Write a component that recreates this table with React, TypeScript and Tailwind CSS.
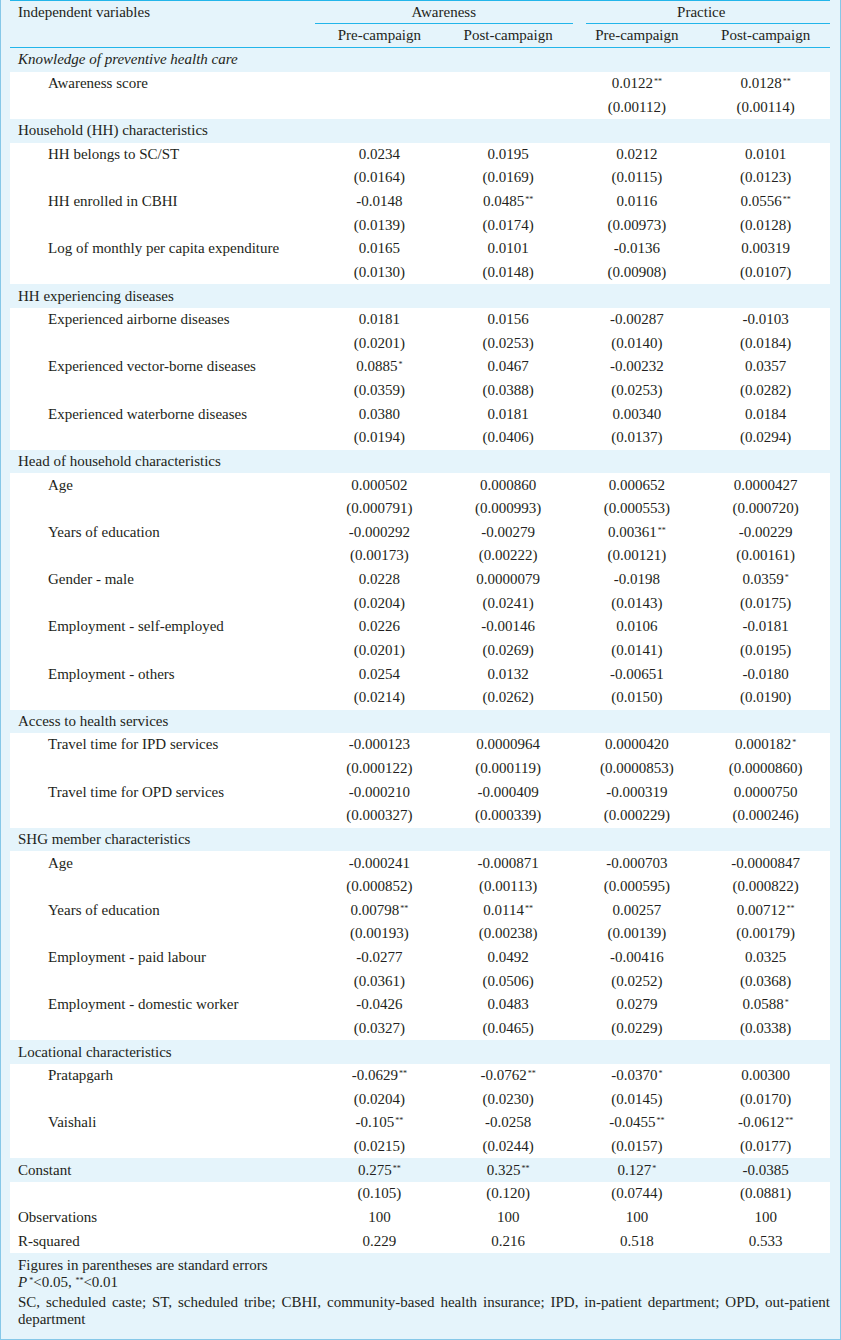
import React from 'react';

type Item = { label: string; coef: string[]; se: string[] };
type Section = { title: string; italic?: boolean; items: Item[] };

const SECTIONS: Section[] = [
  {
    title: 'Knowledge of preventive health care',
    italic: true,
    items: [{ label: 'Awareness score', coef: ['', '', '0.0122**', '0.0128**'], se: ['', '', '(0.00112)', '(0.00114)'] }],
  },
  {
    title: 'Household (HH) characteristics',
    items: [
      { label: 'HH belongs to SC/ST', coef: ['0.0234', '0.0195', '0.0212', '0.0101'], se: ['(0.0164)', '(0.0169)', '(0.0115)', '(0.0123)'] },
      { label: 'HH enrolled in CBHI', coef: ['-0.0148', '0.0485**', '0.0116', '0.0556**'], se: ['(0.0139)', '(0.0174)', '(0.00973)', '(0.0128)'] },
      { label: 'Log of monthly per capita expenditure', coef: ['0.0165', '0.0101', '-0.0136', '0.00319'], se: ['(0.0130)', '(0.0148)', '(0.00908)', '(0.0107)'] },
    ],
  },
  {
    title: 'HH experiencing diseases',
    items: [
      { label: 'Experienced airborne diseases', coef: ['0.0181', '0.0156', '-0.00287', '-0.0103'], se: ['(0.0201)', '(0.0253)', '(0.0140)', '(0.0184)'] },
      { label: 'Experienced vector-borne diseases', coef: ['0.0885*', '0.0467', '-0.00232', '0.0357'], se: ['(0.0359)', '(0.0388)', '(0.0253)', '(0.0282)'] },
      { label: 'Experienced waterborne diseases', coef: ['0.0380', '0.0181', '0.00340', '0.0184'], se: ['(0.0194)', '(0.0406)', '(0.0137)', '(0.0294)'] },
    ],
  },
  {
    title: 'Head of household characteristics',
    items: [
      { label: 'Age', coef: ['0.000502', '0.000860', '0.000652', '0.0000427'], se: ['(0.000791)', '(0.000993)', '(0.000553)', '(0.000720)'] },
      { label: 'Years of education', coef: ['-0.000292', '-0.00279', '0.00361**', '-0.00229'], se: ['(0.00173)', '(0.00222)', '(0.00121)', '(0.00161)'] },
      { label: 'Gender - male', coef: ['0.0228', '0.0000079', '-0.0198', '0.0359*'], se: ['(0.0204)', '(0.0241)', '(0.0143)', '(0.0175)'] },
      { label: 'Employment - self-employed', coef: ['0.0226', '-0.00146', '0.0106', '-0.0181'], se: ['(0.0201)', '(0.0269)', '(0.0141)', '(0.0195)'] },
      { label: 'Employment - others', coef: ['0.0254', '0.0132', '-0.00651', '-0.0180'], se: ['(0.0214)', '(0.0262)', '(0.0150)', '(0.0190)'] },
    ],
  },
  {
    title: 'Access to health services',
    items: [
      { label: 'Travel time for IPD services', coef: ['-0.000123', '0.0000964', '0.0000420', '0.000182*'], se: ['(0.000122)', '(0.000119)', '(0.0000853)', '(0.0000860)'] },
      { label: 'Travel time for OPD services', coef: ['-0.000210', '-0.000409', '-0.000319', '0.0000750'], se: ['(0.000327)', '(0.000339)', '(0.000229)', '(0.000246)'] },
    ],
  },
  {
    title: 'SHG member characteristics',
    items: [
      { label: 'Age', coef: ['-0.000241', '-0.000871', '-0.000703', '-0.0000847'], se: ['(0.000852)', '(0.00113)', '(0.000595)', '(0.000822)'] },
      { label: 'Years of education', coef: ['0.00798**', '0.0114**', '0.00257', '0.00712**'], se: ['(0.00193)', '(0.00238)', '(0.00139)', '(0.00179)'] },
      { label: 'Employment - paid labour', coef: ['-0.0277', '0.0492', '-0.00416', '0.0325'], se: ['(0.0361)', '(0.0506)', '(0.0252)', '(0.0368)'] },
      { label: 'Employment - domestic worker', coef: ['-0.0426', '0.0483', '0.0279', '0.0588*'], se: ['(0.0327)', '(0.0465)', '(0.0229)', '(0.0338)'] },
    ],
  },
  {
    title: 'Locational characteristics',
    items: [
      { label: 'Pratapgarh', coef: ['-0.0629**', '-0.0762**', '-0.0370*', '0.00300'], se: ['(0.0204)', '(0.0230)', '(0.0145)', '(0.0170)'] },
      { label: 'Vaishali', coef: ['-0.105**', '-0.0258', '-0.0455**', '-0.0612**'], se: ['(0.0215)', '(0.0244)', '(0.0157)', '(0.0177)'] },
    ],
  },
];

// split "0.0122**" into value + stars
function Val({ v }: { v: string }) {
  const m = v.match(/^(.*?)(\*+)$/);
  if (!m) return <>{v}</>;
  return (
    <>
      {m[1]}
      <sup className="text-[8px] ml-[1px]">{m[2]}</sup>
    </>
  );
}

function Row({ label, vals, indent, blue, tall = true }: { label?: string; vals: string[]; indent?: boolean; blue?: boolean; tall?: boolean }) {
  return (
    <div className={`grid grid-cols-[305px_repeat(4,1fr)] items-center ${tall ? 'h-[23.63px]' : 'h-[23px]'} ${blue ? '' : 'bg-white'}`}>
      <div className={indent ? 'pl-[38px]' : 'pl-[8px]'}>{label}</div>
      {vals.map((v, i) => (
        <div key={i} className="text-center">
          <Val v={v} />
        </div>
      ))}
    </div>
  );
}

export default function App() {
  return (
    <div
      className="w-[841px] h-[1340px] bg-[#e5f4fb] border border-t-0 border-[#86c8e8] pl-[9px] text-[15px] text-[#231f20] leading-none"
      style={{ fontFamily: '"Liberation Serif", "DejaVu Serif", serif' }}
    >
      <div className="w-[820px] border-t border-[#22b5ea]">
        {/* header */}
        <div className="border-b border-[#22b5ea]">
          <div className="grid grid-cols-[305px_repeat(4,1fr)] h-[23px]">
            <div className="pl-[8px] flex items-center">Independent variables</div>
            <div className="col-span-2 flex flex-col">
              <div className="flex-1 flex items-center justify-center">Awareness</div>
              <div className="h-px bg-[#22b5ea]" />
            </div>
            <div className="col-span-2 flex flex-col">
              <div className="flex-1 flex items-center justify-center">Practice</div>
              <div className="h-px bg-[#22b5ea] ml-[13px]" />
            </div>
          </div>
          <Row blue tall={false} vals={['Pre-campaign', 'Post-campaign', 'Pre-campaign', 'Post-campaign']} />
        </div>

        {SECTIONS.map((s) => (
          <div key={s.title}>
            <div className={`h-[23.63px] flex items-center pl-[8px] ${s.italic ? 'italic' : ''}`}>{s.title}</div>
            {s.items.map((it) => (
              <div key={it.label + s.title}>
                <Row indent label={it.label} vals={it.coef} />
                <Row vals={it.se} />
              </div>
            ))}
          </div>
        ))}

        <Row blue label="Constant" vals={['0.275**', '0.325**', '0.127*', '-0.0385']} />
        <Row vals={['(0.105)', '(0.120)', '(0.0744)', '(0.0881)']} />
        <Row label="Observations" vals={['100', '100', '100', '100']} />
        <Row label="R-squared" vals={['0.229', '0.216', '0.518', '0.533']} />

        <div className="pl-[8px] pt-[4px] leading-[17px]">
          <p>Figures in parentheses are standard errors</p>
          <p>
            <span className="italic">P</span>
            <sup className="text-[8px]"> *</sup>&lt;0.05, <sup className="text-[8px]">**</sup>&lt;0.01
          </p>
          <p className="mt-[3px] text-justify">
            SC, scheduled caste; ST, scheduled tribe; CBHI, community-based health insurance; IPD, in-patient department; OPD, out-patient department
          </p>
        </div>
      </div>
    </div>
  );
}
